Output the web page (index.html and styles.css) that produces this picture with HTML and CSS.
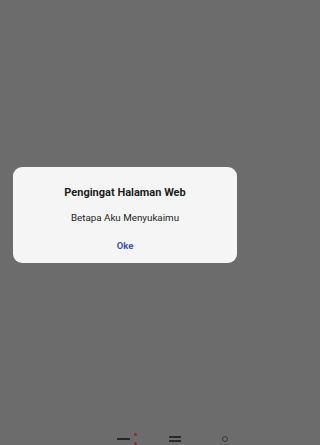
FILE: index.html
```html
<!DOCTYPE html>
<html>
<head>
<meta charset="utf-8">
<link rel="stylesheet" href="styles.css">
</head>
<body>
<div class="screen">
  <div class="dialog">
    <div class="title">Pengingat Halaman Web</div>
    <div class="message">Betapa Aku Menyukaimu</div>
    <div class="actions"><span class="ok">Oke</span></div>
  </div>
  <div class="navbar">
    <span class="nav-dash"></span>
    <span class="nav-dots"><span class="dot"></span><span class="dot"></span></span>
    <span class="nav-lines"><span></span><span></span></span>
    <span class="nav-circle"></span>
  </div>
</div>
</body>
</html>
```
FILE: styles.css
```css
html, body {
  margin: 0;
  padding: 0;
  background: #6c6c6c;
}
body {
  width: 250px;
  height: 445px;
  overflow: hidden;
  font-family: Roboto, "Liberation Sans", sans-serif;
}
.screen {
  height: 445px;
  display: flex;
  flex-direction: column;
  align-items: center;
}
.dialog {
  margin-top: 167px;
  width: 224px;
  height: 96px;
  box-sizing: border-box;
  background: #f5f5f5;
  border-radius: 9px;
  display: flex;
  flex-direction: column;
  align-items: center;
  padding-top: 19px;
}
.title {
  font-size: 11px;
  font-weight: 700;
  color: #1e1e1e;
  line-height: 14px;
}
.message {
  margin-top: 12px;
  font-size: 9.8px;
  color: #1e1e1e;
  line-height: 12px;
}
.actions {
  margin-top: 10px;
}
.ok {
  font-size: 9.5px;
  font-weight: 700;
  color: #4054b0;
  line-height: 12px;
}
.navbar {
  margin-top: auto;
  width: 250px;
  height: 12px;
  display: flex;
  align-items: center;
  padding-left: 117px;
  box-sizing: border-box;
}
.nav-dash {
  width: 13px;
  height: 2px;
  background: #262626;
}
.nav-dots {
  margin-left: 4px;
  height: 12px;
  display: flex;
  flex-direction: column;
  justify-content: space-between;
}
.dot {
  width: 3px;
  height: 3px;
  border-radius: 50%;
  background: #8a2a3a;
}
.nav-lines {
  margin-left: 32px;
  display: flex;
  flex-direction: column;
  gap: 2px;
}
.nav-lines span {
  width: 12px;
  height: 2px;
  background: #2a2a2a;
}
.nav-circle {
  margin-left: 41px;
  width: 4px;
  height: 4px;
  border: 1px solid #3a3a3a;
  border-radius: 50%;
}
```
